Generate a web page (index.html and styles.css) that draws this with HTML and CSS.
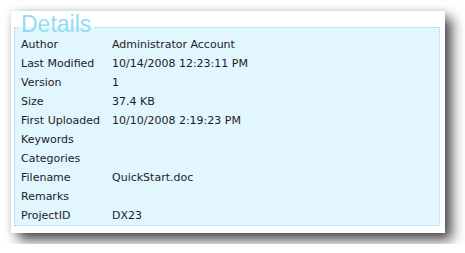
FILE: index.html
```html
<!DOCTYPE html>
<html>
<head>
<meta charset="utf-8">
<link rel="stylesheet" href="styles.css">
</head>
<body>
<div class="panel">
  <fieldset class="details">
    <legend class="details-title">Details</legend>
    <div class="props">
      <div class="label">Author</div><div class="value">Administrator Account</div>
      <div class="label">Last Modified</div><div class="value">10/14/2008 12:23:11 PM</div>
      <div class="label">Version</div><div class="value">1</div>
      <div class="label">Size</div><div class="value">37.4 KB</div>
      <div class="label">First Uploaded</div><div class="value">10/10/2008 2:19:23 PM</div>
      <div class="label">Keywords</div><div class="value"></div>
      <div class="label">Categories</div><div class="value"></div>
      <div class="label">Filename</div><div class="value">QuickStart.doc</div>
      <div class="label">Remarks</div><div class="value"></div>
      <div class="label">ProjectID</div><div class="value">DX23</div>
    </div>
  </fieldset>
</div>
</body>
</html>
```
FILE: styles.css
```css
html, body {
  margin: 0;
  padding: 0;
  background: #ffffff;
}
body {
  padding: 11px;
}
.panel {
  width: 434px;
  height: 222px;
  box-sizing: border-box;
  background: #ffffff;
  padding: 8px 5px 0 3px;
  box-shadow: 7px 7px 12px rgba(0, 0, 0, 0.7), 0 0 6px rgba(0, 0, 0, 0.12);
}
.details {
  margin: 0;
  padding: 0 6px 0 6px;
  border: 1px dotted #a9cfdc;
  border-bottom-color: #8adcf6;
  border-left-color: #8adcf6;
  background: #e1f6fd;
  min-width: 0;
}
.details-title {
  font-family: "Liberation Sans", Arial, sans-serif;
  font-size: 23px;
  line-height: 10px;
  padding: 0 3px 6px 3px;
  margin-left: -3px;
  color: #92dcf7;
}
.props {
  display: grid;
  grid-template-columns: 91px 1fr;
  grid-auto-rows: 19px;
  font-family: "DejaVu Sans", Verdana, sans-serif;
  font-size: 11px;
  line-height: 19px;
  color: #1c1c28;
}
.label, .value {
  white-space: nowrap;
}
```
